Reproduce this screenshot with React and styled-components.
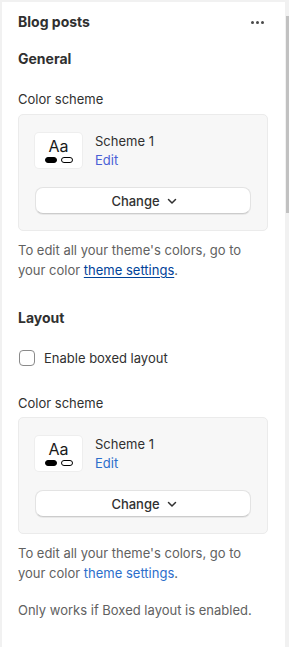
import React from "react";
import styled, { createGlobalStyle } from "styled-components";

const Global = createGlobalStyle`
  html, body { margin: 0; padding: 0; background: #f1f1f1; }
  body { font-family: Inter, "Noto Sans", "Liberation Sans", sans-serif; font-size: 13px; color: #303030; }
  * { box-sizing: border-box; }
`;

const Frame = styled.div`
  display: flex;
  width: 289px;
  height: 647px;
  padding: 2px 0 0 2px;
  background: #f1f1f1;
  overflow: hidden;
`;

const Panel = styled.div`
  flex: 1;
  background: #ffffff;
  padding: 9px 0 0 16px;
  display: flex;
  flex-direction: column;
`;

const Scrollbar = styled.div`
  width: 4px;
  display: flex;
  flex-direction: column;
  align-items: flex-end;
  padding-top: 14px;
`;

const Thumb = styled.div`
  width: 3px;
  height: 197px;
  background: #c1c1c1;
`;

const Header = styled.div`
  display: flex;
  align-items: center;
  justify-content: space-between;
  width: 250px;
  height: 20px;
  margin-top: 1px;
`;

const Title = styled.div`
  font-size: 14px;
  font-weight: 650;
  line-height: 20px;
  color: #303030;
  margin-top: ${(p) => p.$mt || 0}px;
`;

const Dots = styled.div`
  display: flex;
  gap: 2px;
  margin-right: 4px;
  span {
    width: 3px;
    height: 3px;
    border-radius: 50%;
    background: #4a4a4a;
  }
`;

const Label = styled.div`
  line-height: 20px;
  color: #303030;
  margin-top: ${(p) => p.$mt || 0}px;
`;

const Card = styled.div`
  width: 250px;
  margin-top: ${(p) => p.$mt || 5}px;
  background: #f7f7f7;
  border: 1px solid #ebebeb;
  border-radius: 5px;
  padding: 18px 16px 16px;
  display: flex;
  flex-direction: column;
  gap: 19px;
`;

const SchemeRow = styled.div`
  display: flex;
  align-items: flex-start;
  gap: 13px;
  height: 35px;
`;

const Swatch = styled.div`
  width: 47px;
  height: 35px;
  background: #ffffff;
  border-radius: 4px;
  box-shadow: 0 0 0 1px #eeeeee;
  display: flex;
  flex-direction: column;
  align-items: center;
  padding-top: 4px;
`;

const Aa = styled.div`
  font-size: 16px;
  line-height: 18px;
  color: #1a1a1a;
`;

const Pills = styled.div`
  display: flex;
  gap: 4px;
  margin-top: 2px;
`;

const Pill = styled.div`
  width: 12px;
  height: 6px;
  border-radius: 3px;
  background: ${(p) => (p.$filled ? "#000" : "#fff")};
  border: 1.2px solid #000;
`;

const SchemeText = styled.div`
  display: flex;
  flex-direction: column;
  line-height: 19px;
  margin-top: -1px;
`;

const EditLink = styled.a`
  color: ${(p) => p.$color};
  text-decoration: none;
`;

const ChangeButton = styled.button`
  width: 216px;
  height: 27px;
  border: 1px solid #e3e3e3;
  border-bottom-color: #cccccc;
  border-radius: 8px;
  background: #fff;
  box-shadow: 0 1px 0 rgba(0, 0, 0, 0.06);
  display: flex;
  align-items: center;
  justify-content: center;
  gap: 5px;
  font-family: inherit;
  font-size: 13px;
  font-weight: 450;
  color: #303030;
  padding: 0 0 0 4px;
`;

const Help = styled.div`
  width: 240px;
  margin-top: ${(p) => p.$mt || 9}px;
  line-height: 20px;
  color: #616161;
`;

const HelpLink = styled.a`
  color: ${(p) => (p.$underline ? "#004299" : "#2c6ecb")};
  text-decoration: ${(p) => (p.$underline ? "underline" : "none")};
  text-underline-offset: 2px;
`;

const CheckRow = styled.label`
  display: flex;
  align-items: center;
  gap: 9px;
  margin-top: 20px;
  margin-left: 1px;
  line-height: 20px;
`;

const Box = styled.span`
  width: 16px;
  height: 16px;
  border: 1px solid #8a8a8a;
  border-radius: 4px;
  background: #fff;
`;

const Chevron = () => (
  <svg width="14" height="14" viewBox="0 0 14 14" fill="none">
    <path d="M3.5 5.5 7 9 10.5 5.5" stroke="#303030" strokeWidth="1.5" strokeLinecap="round" strokeLinejoin="round" />
  </svg>
);

const SchemeCard = ({ mt, editColor }) => (
  <Card $mt={mt}>
    <SchemeRow>
      <Swatch>
        <Aa>Aa</Aa>
        <Pills>
          <Pill $filled />
          <Pill />
        </Pills>
      </Swatch>
      <SchemeText>
        <span>Scheme 1</span>
        <EditLink $color={editColor} href="#">Edit</EditLink>
      </SchemeText>
    </SchemeRow>
    <ChangeButton>
      Change <Chevron />
    </ChangeButton>
  </Card>
);

export default function App() {
  return (
    <>
      <Global />
      <Frame>
        <Panel>
          <Header>
            <Title>Blog posts</Title>
            <Dots>
              <span />
              <span />
              <span />
            </Dots>
          </Header>
          <Title $mt={17}>General</Title>
          <Label $mt={20}>Color scheme</Label>
          <SchemeCard mt={5} editColor="#4a5fd6" />
          <Help>
            To edit all your theme's colors, go to your color{" "}
            <HelpLink $underline href="#">theme settings</HelpLink>.
          </Help>
          <Title $mt={28}>Layout</Title>
          <CheckRow>
            <Box />
            Enable boxed layout
          </CheckRow>
          <Label $mt={25}>Color scheme</Label>
          <SchemeCard mt={4} editColor="#2c6ecb" />
          <Help>
            To edit all your theme's colors, go to your color{" "}
            <HelpLink href="#">theme settings</HelpLink>.
          </Help>
          <Help $mt={17}>Only works if Boxed layout is enabled.</Help>
        </Panel>
        <Scrollbar>
          <Thumb />
        </Scrollbar>
      </Frame>
    </>
  );
}
